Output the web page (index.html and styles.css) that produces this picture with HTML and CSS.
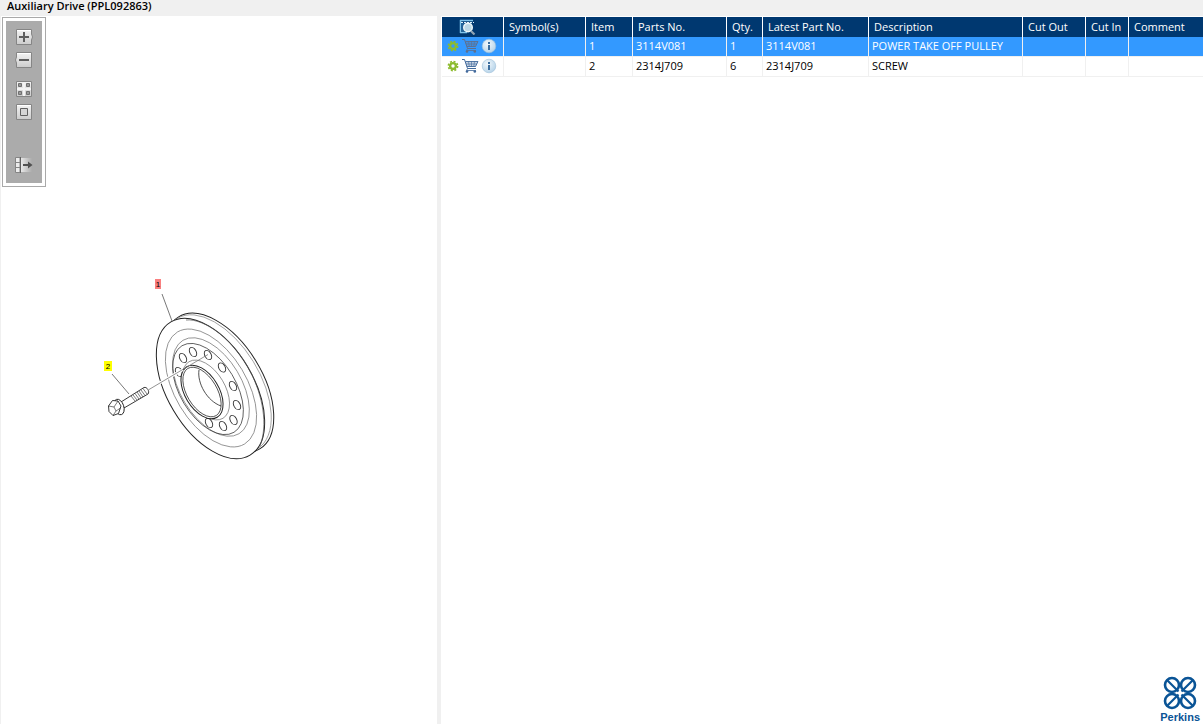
FILE: index.html
```
<!DOCTYPE html>
<html lang="en">
<head>
    <meta charset="UTF-8">
    <meta name="viewport" content="width=device-width, initial-scale=1.0">
    <title>Auxiliary Drive (PPL092863)</title>
    <link rel="stylesheet" href="styles.css">
</head>
<body>
    <svg class="defs" aria-hidden="true">
        <defs>
            <linearGradient id="btn-face" x1="0" y1="0" x2="0" y2="1">
                <stop offset="0" stop-color="#f4f4f4"/>
                <stop offset="1" stop-color="#cccccc"/>
            </linearGradient>
            <linearGradient id="fade-right">
                <stop offset="0" stop-color="#e8e8e8"/>
                <stop offset="1" stop-color="#ababab"/>
            </linearGradient>
            <radialGradient id="info-face" cx=".4" cy=".35" r=".7">
                <stop offset="0" stop-color="#f2f8fc"/>
                <stop offset="1" stop-color="#b4d2e8"/>
            </radialGradient>
            <symbol id="gear" viewBox="0 0 12 12">
                <circle cx="6" cy="6" r="4.6" fill="none" stroke="#8dbb2e" stroke-width="1.6" stroke-dasharray="2 1.61"/>
                <circle cx="6" cy="6" r="2.9" fill="none" stroke="#8dbb2e" stroke-width="2.4"/>
            </symbol>
            <symbol id="cart" viewBox="0 0 18 16">
                <path d="M4 3.500h13l-2.500 5.500H6z" fill="currentColor" fill-opacity=".3"/>
                <path d="M1 1.500h2.500l3 9h8.500" fill="none" stroke="currentColor"/>
                <path d="M4.500 3.500h12.500l-2.500 5H6" fill="none" stroke="currentColor" stroke-width=".9"/>
                <path d="M5 6h11M7.500 3.500l.8 5M10.500 3.500v5M13.500 3.500l-.7 5" fill="none" stroke="currentColor" stroke-width=".6"/>
                <path d="M6.500 10.500l-1 2h9.500" fill="none" stroke="currentColor" stroke-width=".8"/>
                <circle cx="6" cy="13.500" r="1.300" fill="currentColor"/>
                <circle cx="13.800" cy="13.500" r="1.300" fill="currentColor"/>
            </symbol>
            <symbol id="info" viewBox="0 0 16 16">
                <circle cx="8" cy="8" r="6.800" fill="url(#info-face)" stroke="#9dbfd8" stroke-width=".6"/>
                <path d="M7 4h2v2H7zM7 7h2v5H7z" fill="#3c6e9f"/>
            </symbol>
        </defs>
    </svg>

    <header class="title-bar">
        <h1>Auxiliary Drive (PPL092863)</h1>
    </header>

    <main class="viewer">
        <section class="illustration">
            <div class="toolbar">
                <button type="button" aria-label="Zoom in">
                    <svg viewBox="0 0 18 16"><path d="M1.500.5h15V5l1 3-1 3v4.500h-15z" fill="url(#btn-face)" stroke="#858585"/><path d="M2 1.500h14" stroke="#fff"/><path d="M9 3v10M4 8h10" stroke="#5e5e5e" stroke-width="2"/></svg>
                </button>
                <button type="button" aria-label="Zoom out">
                    <svg viewBox="0 0 18 16"><path d="M16.500.5h-15V5l-1 3 1 3v4.500h15z" fill="url(#btn-face)" stroke="#858585"/><path d="M2 1.500h14" stroke="#fff"/><path d="M4 8h10" stroke="#5e5e5e" stroke-width="2"/></svg>
                </button>
                <button type="button" class="spaced" aria-label="Fit to window">
                    <svg viewBox="0 0 18 16"><path d="M1.500.5h15v15h-15z" fill="url(#btn-face)" stroke="#858585"/><path d="M9 1v14M2 8h14" stroke="#f4f4f4" stroke-width="2"/><path d="M3.500 2.500h3v3h-3zM11.500 2.500h3v3h-3zM3.500 10.500h3v3h-3zM11.500 10.500h3v3h-3z" fill="#999" stroke="#707070"/></svg>
                </button>
                <button type="button" aria-label="Actual size">
                    <svg viewBox="0 0 18 16"><path d="M1.500.5h15v15h-15z" fill="url(#btn-face)" stroke="#858585"/><path d="M2 1.500h14" stroke="#fff"/><path d="M5.500 4.500h7v7h-7z" fill="#d5d5d5" stroke="#606060"/></svg>
                </button>
                <button type="button" class="far" aria-label="Hide parts list">
                    <svg viewBox="0 0 18 16"><path d="M6 1h11v14H6z" fill="url(#fade-right)"/><path d="M.5.5H5v15H.5z" fill="#ececec" stroke="#858585"/><path d="M0 5.500h5M0 10.500h5" stroke="#858585"/><path d="M5.500 0v16" stroke="#606060"/><path d="M8 7h5V4.500L17.500 8 13 11.500V9H8z" fill="#505050"/></svg>
                </button>
            </div>

            <svg class="drawing" viewBox="95 270 190 200" role="img" aria-label="Pulley and screw">
                <!-- pulley rims -->
                <g fill="#fff" stroke="#222">
                    <ellipse rx="77.500" ry="43" transform="translate(219 383) rotate(58.300)"/>
                    <ellipse rx="76.500" ry="42" stroke="#777" stroke-width=".6" transform="translate(217.500 383.500) rotate(58.300)"/>
                    <ellipse rx="77.500" ry="43" transform="translate(210.500 388.500) rotate(59.300)"/>
                </g>
                <path d="M186 320C205 318 235 341 250 371C263 396 268 425 260 446" fill="none" stroke="#555" stroke-width=".7"/>
                <!-- face rings -->
                <g fill="none" stroke="#777" stroke-width=".7">
                    <ellipse rx="65.300" ry="36" transform="translate(211 388) rotate(59)"/>
                    <ellipse rx="54.500" ry="30.500" transform="translate(211 387) rotate(59)"/>
                    <ellipse rx="50.500" ry="28" stroke="#333" transform="translate(208 389) rotate(59)"/>
                    <ellipse rx="33" ry="19" transform="translate(206 390) rotate(59)"/>
                </g>
                <!-- bolt holes -->
                <g fill="#fff" stroke="#333" stroke-width=".9">
                    <ellipse rx="5" ry="3.200" transform="translate(183 358) rotate(60)"/>
                    <ellipse rx="5" ry="3.200" transform="translate(193 352) rotate(60)"/>
                    <ellipse rx="5" ry="3.200" transform="translate(208 355) rotate(60)"/>
                    <ellipse rx="5" ry="3.200" transform="translate(222 367.500) rotate(60)"/>
                    <ellipse rx="5" ry="3.200" transform="translate(233 386) rotate(60)"/>
                    <ellipse rx="5" ry="3.200" transform="translate(237 405) rotate(60)"/>
                    <ellipse rx="5" ry="3.200" transform="translate(233.500 420) rotate(60)"/>
                    <ellipse rx="5" ry="3.200" transform="translate(223 426) rotate(60)"/>
                    <ellipse rx="5" ry="3.200" transform="translate(209 423) rotate(60)"/>
                    <ellipse rx="5" ry="3.200" transform="translate(179 372) rotate(60)"/>
                </g>
                <!-- hub and bore -->
                <g fill="#fff" stroke="#222">
                    <ellipse rx="29.500" ry="17" transform="translate(202 392) rotate(59)"/>
                    <ellipse rx="27.500" ry="15" stroke-width=".7" transform="translate(202 392) rotate(59)"/>
                    <path d="M199 370C197 383 207 401 221 406" fill="none" stroke-width=".8"/>
                </g>
                <!-- screw -->
                <path d="M151 388l32-18.500" stroke="#fff" stroke-width="3"/>
                <path d="M149 389.500l59-35" stroke="#777" stroke-width=".8"/>
                <g fill="#fff" stroke="#222" stroke-width=".9" stroke-linejoin="round">
                    <path d="M121 402l23-14.500c3-1 6 4 4 6.500L124 408z"/>
                    <path d="M131 396l4 5M133 395l4 5M135 393.500l4 5.500M137 392l4 6M139 391l4 6M141 390l4 5.500M143 388.500l4 5.500" stroke-width=".6"/>
                    <ellipse cx="119" cy="407" rx="4.800" ry="8" transform="rotate(-18 119 407)"/>
                    <path d="M108.500 406l4-5.500 5.500.5 3 5-2.500 7.500-5.500 2-4-4z"/>
                    <path d="M108.500 406l5.500 1 4-6M114 407l2 4-3 4.500M116 411l4.500-3" fill="none" stroke-width=".6"/>
                </g>
                <!-- callouts -->
                <path d="M162 294l10 27M112 374l17 20" fill="none" stroke="#555" stroke-width=".8"/>
                <path d="M155 279h6v10h-6z" fill="#fa7f7f"/>
                <path d="M104 361h8v10h-8z" fill="#ff0"/>
                <text x="158" y="287" class="callout">1</text>
                <text x="108" y="369" class="callout">2</text>
            </svg>
        </section>

        <div class="splitter"></div>

        <section class="parts">
            <table>
                <colgroup>
                    <col class="c-tools"><col class="c-symbols"><col class="c-item"><col class="c-part"><col class="c-qty">
                    <col class="c-latest"><col class="c-desc"><col class="c-out"><col class="c-in"><col>
                </colgroup>
                <thead>
                    <tr>
                        <th class="tools">
                            <button type="button" aria-label="Search parts">
                                <svg class="search-icon" viewBox="0 0 18 16"><path d="M1 1.500h13M1.500 1v13M1 13.500h7" stroke="#7ec3ea" stroke-width="1.500" fill="none"/><path d="M2 4h11v9H2z" fill="#23649a"/><path d="M2 3.500h13" stroke="#dff2fd" stroke-dasharray="2 1"/><circle cx="9" cy="8.500" r="4.300" fill="#bcd9e7" stroke="#edf7fa" stroke-width="1.400"/><path d="M12 12l3.500 3.500" stroke="#8fa3b3" stroke-width="2.200"/></svg>
                            </button>
                        </th>
                        <th>Symbol(s)</th>
                        <th>Item</th>
                        <th>Parts No.</th>
                        <th>Qty.</th>
                        <th>Latest Part No.</th>
                        <th>Description</th>
                        <th>Cut Out</th>
                        <th>Cut In</th>
                        <th>Comment</th>
                    </tr>
                </thead>
                <tbody>
                    <tr class="selected">
                        <td class="tools">
                            <div class="row-tools">
                                <button type="button" aria-label="Options for item 1"><svg class="gear-icon"><use href="#gear"/></svg></button>
                                <button type="button" aria-label="Add item 1 to cart"><svg class="cart-icon"><use href="#cart"/></svg></button>
                                <button type="button" aria-label="Information on item 1"><svg class="info-icon"><use href="#info"/></svg></button>
                            </div>
                        </td>
                        <td></td>
                        <td>1</td>
                        <td>3114V081</td>
                        <td>1</td>
                        <td>3114V081</td>
                        <td>POWER TAKE OFF PULLEY</td>
                        <td></td>
                        <td></td>
                        <td></td>
                    </tr>
                    <tr>
                        <td class="tools">
                            <div class="row-tools">
                                <button type="button" aria-label="Options for item 2"><svg class="gear-icon"><use href="#gear"/></svg></button>
                                <button type="button" aria-label="Add item 2 to cart"><svg class="cart-icon"><use href="#cart"/></svg></button>
                                <button type="button" aria-label="Information on item 2"><svg class="info-icon"><use href="#info"/></svg></button>
                            </div>
                        </td>
                        <td></td>
                        <td>2</td>
                        <td>2314J709</td>
                        <td>6</td>
                        <td>2314J709</td>
                        <td>SCREW</td>
                        <td></td>
                        <td></td>
                        <td></td>
                    </tr>
                </tbody>
            </table>

            <div class="brand">
                <svg viewBox="0 0 34 34" aria-hidden="true">
                    <g fill="none" stroke="#0a5496" stroke-width="2.600">
                        <circle cx="9" cy="9" r="7"/>
                        <circle cx="25" cy="9" r="7"/>
                        <circle cx="9" cy="25" r="7"/>
                        <circle cx="25" cy="25" r="7"/>
                        <path d="M4 4l26 26M30 4L4 30" stroke-width="2.200"/>
                    </g>
                    <path d="M17 14l3 3-3 3-3-3z" fill="#fff"/>
                </svg>
                <span>Perkins</span>
            </div>
        </section>
    </main>
</body>
</html>
```

FILE: styles.css
```
* {
    box-sizing: border-box;
}
body {
    margin: 0;
    min-height: 100vh;
    display: flex;
    flex-direction: column;
    background: #fff;
    color: #000;
    font-family: "Open Sans", "Noto Sans", sans-serif;
    font-size: 11px;
}
button {
    display: block;
    padding: 0;
    border: none;
    background: none;
    color: inherit;
    cursor: pointer;
}
svg {
    display: block;
}
.defs {
    position: absolute;
    width: 0;
    height: 0;
}
.title-bar {
    height: 16px;
    padding-left: 7px;
    background: #f0f0f0;
}
.title-bar h1 {
    margin: 0;
    font-size: 11px;
    line-height: 12px;
    font-weight: 600;
}
.viewer {
    flex: 1;
    display: grid;
    grid-template-columns: 437fr 4px 762fr;
}

/* illustration side */
.illustration {
    padding: 1px;
    border-left: 1px solid #f0f0f0;
}
.toolbar {
    width: 44px;
    height: 170px;
    padding: 11px 9px;
    display: flex;
    flex-direction: column;
    align-items: center;
    gap: 7px;
    border: 1px solid #a9a9a9;
    background: #ababab;
    box-shadow: inset 0 0 0 3px #fff;
}
.toolbar svg {
    width: 18px;
    height: 16px;
}
.toolbar .spaced {
    margin-top: 6px;
}
.toolbar .far {
    margin-top: 30px;
}
.drawing {
    width: 190px;
    height: 200px;
    margin: 83px 0 0 93px;
}
.callout {
    font-family: "Liberation Sans", sans-serif;
    font-size: 8px;
    text-anchor: middle;
}
.splitter {
    background: #f0f0f0;
}

/* parts list */
.parts {
    display: flex;
    flex-direction: column;
    padding: 1px 0 0 1px;
    min-width: 0;
}
table {
    width: 100%;
    table-layout: fixed;
    border-collapse: separate;
    border-spacing: 0;
}
.c-tools { width: 62px; }
.c-symbols { width: 82px; }
.c-item { width: 47px; }
.c-part { width: 94px; }
.c-qty { width: 36px; }
.c-latest { width: 106px; }
.c-desc { width: 154px; }
.c-out { width: 63px; }
.c-in { width: 43px; }
th, td {
    height: 20px;
    padding: 0 0 0 5px;
    line-height: 16px;
    text-align: left;
    white-space: nowrap;
    border-right: 1px solid #f0f0f0;
}
th {
    background: #003870;
    color: #fff;
    font-weight: normal;
    border-right-color: #fff;
}
td {
    padding: 0 0 2px 3px;
    border-bottom: 1px solid #f0f0f0;
}
th:last-child, td:last-child {
    border-right: none;
}
.selected td {
    background: #3399ff;
    color: #fff;
}
th.tools {
    padding-left: 17px;
}
td.tools {
    padding-left: 5px;
}
.search-icon {
    width: 18px;
    height: 16px;
}
.row-tools {
    display: flex;
    align-items: center;
    gap: 2px;
}
.gear-icon {
    width: 12px;
    height: 12px;
}
.cart-icon {
    width: 18px;
    height: 16px;
    color: #426a9c;
}
.selected .cart-icon {
    color: #5f6f8c;
}
.info-icon {
    width: 16px;
    height: 16px;
}
.brand {
    margin-top: auto;
    align-self: flex-end;
    padding-right: 3px;
    display: flex;
    flex-direction: column;
    align-items: center;
    color: #0a5496;
    font-family: "Liberation Sans", sans-serif;
    font-weight: bold;
    line-height: 14px;
}
.brand svg {
    width: 34px;
    height: 34px;
}
```
